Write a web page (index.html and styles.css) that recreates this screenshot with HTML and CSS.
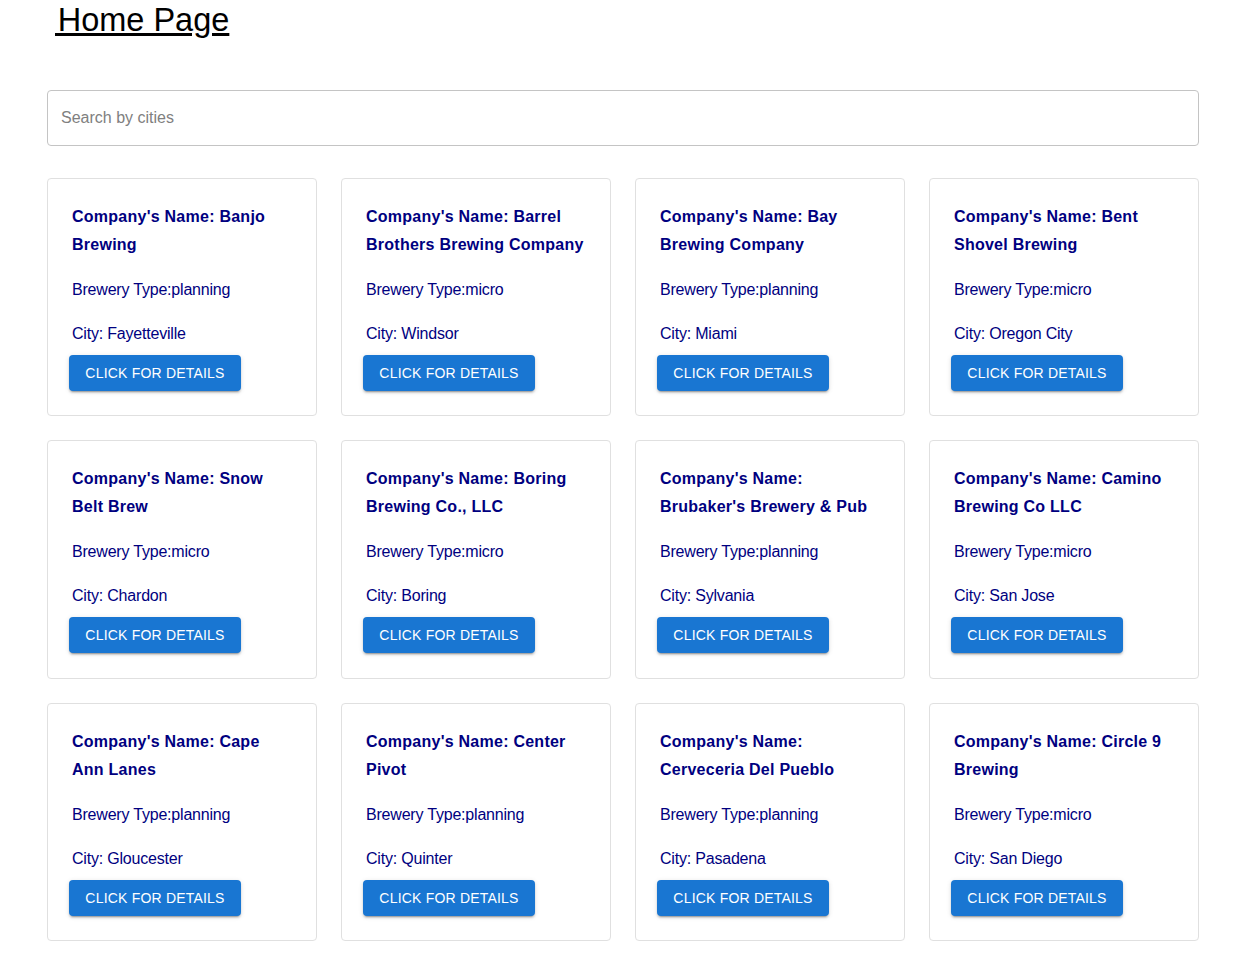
FILE: index.html
```html
<!DOCTYPE html>
<html lang="en">
<head>
<meta charset="utf-8">
<title>Home Page</title>
<link rel="stylesheet" href="styles.css">
</head>
<body>
<div class="page">
  <h1 class="title"><span class="title-link">&#8202;Home Page</span></h1>
  <div class="search">
    <input class="search-input" type="text" placeholder="Search by cities">
  </div>
  <div class="grid">
    <div class="card">
      <div class="card-name">Company's Name: Banjo Brewing</div>
      <div class="card-line card-type">Brewery Type:planning</div>
      <div class="card-line">City: Fayetteville</div>
      <div class="card-actions"><button class="btn">Click for details</button></div>
    </div>
    <div class="card">
      <div class="card-name">Company's Name: Barrel Brothers Brewing Company</div>
      <div class="card-line card-type">Brewery Type:micro</div>
      <div class="card-line">City: Windsor</div>
      <div class="card-actions"><button class="btn">Click for details</button></div>
    </div>
    <div class="card">
      <div class="card-name">Company's Name: Bay Brewing Company</div>
      <div class="card-line card-type">Brewery Type:planning</div>
      <div class="card-line">City: Miami</div>
      <div class="card-actions"><button class="btn">Click for details</button></div>
    </div>
    <div class="card">
      <div class="card-name">Company's Name: Bent Shovel Brewing</div>
      <div class="card-line card-type">Brewery Type:micro</div>
      <div class="card-line">City: Oregon City</div>
      <div class="card-actions"><button class="btn">Click for details</button></div>
    </div>
    <div class="card">
      <div class="card-name">Company's Name: Snow Belt Brew</div>
      <div class="card-line card-type">Brewery Type:micro</div>
      <div class="card-line">City: Chardon</div>
      <div class="card-actions"><button class="btn">Click for details</button></div>
    </div>
    <div class="card">
      <div class="card-name">Company's Name: Boring Brewing Co., LLC</div>
      <div class="card-line card-type">Brewery Type:micro</div>
      <div class="card-line">City: Boring</div>
      <div class="card-actions"><button class="btn">Click for details</button></div>
    </div>
    <div class="card">
      <div class="card-name">Company's Name: Brubaker's Brewery &amp; Pub</div>
      <div class="card-line card-type">Brewery Type:planning</div>
      <div class="card-line">City: Sylvania</div>
      <div class="card-actions"><button class="btn">Click for details</button></div>
    </div>
    <div class="card">
      <div class="card-name">Company's Name: Camino Brewing Co LLC</div>
      <div class="card-line card-type">Brewery Type:micro</div>
      <div class="card-line">City: San Jose</div>
      <div class="card-actions"><button class="btn">Click for details</button></div>
    </div>
    <div class="card">
      <div class="card-name">Company's Name: Cape Ann Lanes</div>
      <div class="card-line card-type">Brewery Type:planning</div>
      <div class="card-line">City: Gloucester</div>
      <div class="card-actions"><button class="btn">Click for details</button></div>
    </div>
    <div class="card">
      <div class="card-name">Company's Name: Center Pivot</div>
      <div class="card-line card-type">Brewery Type:planning</div>
      <div class="card-line">City: Quinter</div>
      <div class="card-actions"><button class="btn">Click for details</button></div>
    </div>
    <div class="card">
      <div class="card-name">Company's Name: Cerveceria Del Pueblo</div>
      <div class="card-line card-type">Brewery Type:planning</div>
      <div class="card-line">City: Pasadena</div>
      <div class="card-actions"><button class="btn">Click for details</button></div>
    </div>
    <div class="card">
      <div class="card-name">Company's Name: Circle 9 Brewing</div>
      <div class="card-line card-type">Brewery Type:micro</div>
      <div class="card-line">City: San Diego</div>
      <div class="card-actions"><button class="btn">Click for details</button></div>
    </div>
  </div>
</div>
</body>
</html>
```

FILE: styles.css
```css
html, body {
  margin: 0;
  padding: 0;
  background: #ffffff;
}

body {
  font-family: "Liberation Sans", Arial, Helvetica, sans-serif;
  color: #000000;
}

.page {
  width: 1152px;
  margin-left: 47px;
  padding-bottom: 40px;
}

.title {
  margin: 0 0 52px 8px;
  padding-top: 2px;
  height: 36px;
  font-size: 32.5px;
  font-weight: 400;
  line-height: 36px;
}

.title-link {
  text-decoration: underline;
  color: #000000;
}

.search {
  height: 56px;
  box-sizing: border-box;
  border: 1px solid #c4c4c4;
  border-radius: 4px;
  display: flex;
  align-items: center;
  margin-bottom: 31.75px;
}

.search-input {
  flex: 1;
  border: none;
  outline: none;
  background: transparent;
  padding: 0 13px;
  height: 54px;
  font-family: "Liberation Sans", Arial, sans-serif;
  font-size: 16px;
  letter-spacing: 0;
  color: #222;
}

.search-input::placeholder {
  color: #808080;
  opacity: 1;
}

.grid {
  display: grid;
  grid-template-columns: repeat(4, 270px);
  column-gap: 24px;
  row-gap: 24px;
}

.card {
  box-sizing: border-box;
  height: 238.5px;
  border: 1px solid #e0e0e0;
  border-radius: 4px;
  padding: 24px;
  color: #000080;
}

.card-name {
  font-size: 16px;
  font-weight: 700;
  line-height: 28px;
  letter-spacing: 0.25px;
  margin-bottom: 19px;
  height: 56px;
}

.card-line {
  font-size: 16px;
  line-height: 24px;
  letter-spacing: -0.2px;
}

.card-type {
  margin-bottom: 20px;
}

.card-actions {
  margin-top: 9px;
  margin-left: -3px;
  display: flex;
}

.btn {
  background: #1976d2;
  color: #ffffff;
  border: none;
  border-radius: 4px;
  height: 36px;
  width: 172px;
  padding: 0;
  white-space: nowrap;
  font-family: "Liberation Sans", Arial, sans-serif;
  font-size: 14px;
  letter-spacing: 0.2px;
  text-transform: uppercase;
  box-shadow: 0 3px 1px -2px rgba(0,0,0,0.2), 0 2px 2px 0 rgba(0,0,0,0.14), 0 1px 5px 0 rgba(0,0,0,0.12);
  cursor: pointer;
}
```
